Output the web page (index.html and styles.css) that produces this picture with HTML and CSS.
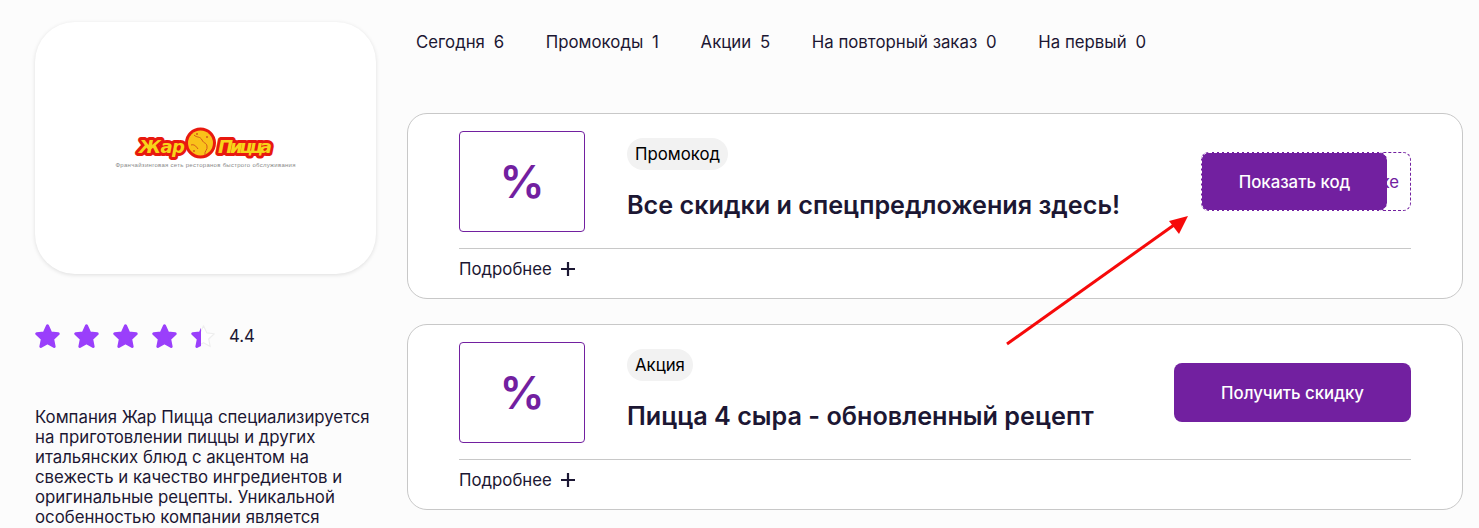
FILE: index.html
```html
<!DOCTYPE html>
<html lang="ru">
<head>
    <meta charset="UTF-8">
    <title>Жар Пицца — промокоды и акции</title>
    <link rel="stylesheet" href="styles.css">
</head>
<body>
    <div class="page">
        <aside class="sidebar">
            <div class="logo-card">
                <svg class="logo" width="184" height="48" viewBox="0 0 184 48">
                    <text class="logo-word logo-outline" x="25" y="29" textLength="46">Жар</text>
                    <text class="logo-word" x="25" y="29" textLength="46">Жар</text>
                    <circle cx="86.500" cy="19" r="15.500" fill="#e8190f"/>
                    <circle cx="86.500" cy="19" r="12.500" fill="#f9c21a"/>
                    <path d="M80 11c3 3 6 1 8 5s4 2 5 6-3 5-2 9M77 21c3-1 5 1 7 4" fill="none" stroke="#d4591a" stroke-width="1"/>
                    <circle cx="83" cy="10" r="1" fill="#d4591a"/>
                    <circle cx="93" cy="13" r="1" fill="#d4591a"/>
                    <circle cx="80" cy="27" r="1" fill="#d4591a"/>
                    <text class="logo-word logo-outline" x="104" y="29" textLength="54">Пицца</text>
                    <text class="logo-word" x="104" y="29" textLength="54">Пицца</text>
                    <text class="logo-tag" x="1.500" y="43" textLength="180">Франчайзинговая сеть ресторанов быстрого обслуживания</text>
                </svg>
            </div>

            <div class="rating">
                <div class="stars">
                    <svg class="star" viewBox="1 1 22 22"><path d="M12 2.500l2.900 6.300 6.600.8-4.900 4.600 1.300 6.700-5.900-3.300-5.900 3.300 1.300-6.700-4.900-4.600 6.600-.8z"/></svg>
                    <svg class="star" viewBox="1 1 22 22"><path d="M12 2.500l2.900 6.300 6.600.8-4.900 4.600 1.300 6.700-5.900-3.300-5.900 3.300 1.300-6.700-4.900-4.600 6.600-.8z"/></svg>
                    <svg class="star" viewBox="1 1 22 22"><path d="M12 2.500l2.900 6.300 6.600.8-4.900 4.600 1.300 6.700-5.900-3.300-5.900 3.300 1.300-6.700-4.900-4.600 6.600-.8z"/></svg>
                    <svg class="star" viewBox="1 1 22 22"><path d="M12 2.500l2.900 6.300 6.600.8-4.900 4.600 1.300 6.700-5.900-3.300-5.900 3.300 1.300-6.700-4.900-4.600 6.600-.8z"/></svg>
                    <svg class="star" viewBox="1 1 22 22">
                        <clipPath id="star-part"><rect x="0" y="0" width="9.800" height="24"/></clipPath>
                        <path class="star-empty" d="M12 2.500l2.900 6.300 6.600.8-4.900 4.600 1.300 6.700-5.900-3.300-5.900 3.300 1.300-6.700-4.900-4.600 6.600-.8z"/>
                        <path clip-path="url(#star-part)" d="M12 2.500l2.900 6.300 6.600.8-4.900 4.600 1.300 6.700-5.900-3.300-5.900 3.300 1.300-6.700-4.900-4.600 6.600-.8z"/>
                    </svg>
                </div>
                <span class="rating-value">4.4</span>
            </div>

            <p class="about">Компания Жар Пицца специализируется на приготовлении пиццы и других итальянских блюд с акцентом на свежесть и качество ингредиентов и оригинальные рецепты. Уникальной особенностью компании является</p>
        </aside>

        <main class="content">
            <nav class="tabs">
                <a class="tab">Сегодня<span>6</span></a>
                <a class="tab">Промокоды<span>1</span></a>
                <a class="tab">Акции<span>5</span></a>
                <a class="tab">На повторный заказ<span>0</span></a>
                <a class="tab">На первый<span>0</span></a>
            </nav>

            <section class="offer">
                <div class="offer-main">
                    <div class="percent-box">%</div>
                    <div class="offer-text">
                        <span class="pill">Промокод</span>
                        <h2>Все скидки и спецпредложения здесь!</h2>
                    </div>
                    <div class="code-wrap">
                        <span class="code-hidden">ке</span>
                        <button class="btn btn-code">Показать код</button>
                    </div>
                </div>
                <div class="offer-more">Подробнее
                    <svg class="plus" viewBox="0 0 16 16"><path d="M8 1v14M1 8h14"/></svg>
                </div>
            </section>

            <section class="offer">
                <div class="offer-main">
                    <div class="percent-box">%</div>
                    <div class="offer-text">
                        <span class="pill">Акция</span>
                        <h2>Пицца 4 сыра - обновленный рецепт</h2>
                    </div>
                    <button class="btn btn-discount">Получить скидку</button>
                </div>
                <div class="offer-more">Подробнее
                    <svg class="plus" viewBox="0 0 16 16"><path d="M8 1v14M1 8h14"/></svg>
                </div>
            </section>
        </main>
    </div>

    <!-- стрелка поверх страницы -->
    <svg class="arrow" width="190" height="140" viewBox="0 0 190 140">
        <path d="M3 131L170 12" stroke="#f60a0a" stroke-width="3" fill="none"/>
        <path d="M184 3L165 8L175 21z" fill="#f60a0a"/>
    </svg>
</body>
</html>
```

FILE: styles.css
```css
html, body {
    height: 100%;
    overflow: hidden;
}
body {
    margin: 0;
    background: #fcfcfc;
    color: #1c1733;
    font-family: Inter, "Liberation Sans", sans-serif;
    font-size: 16.8px;
}
.page {
    display: flex;
    gap: 31px;
    padding: 22px 16px 0 35px;
}
.sidebar {
    flex: 0 0 341px;
}
.logo-card {
    display: flex;
    align-items: center;
    justify-content: center;
    height: 252px;
    background: #fff;
    border-radius: 40px;
    box-shadow: 0 1px 4px rgba(0, 0, 0, .12);
}
.logo-word {
    font-family: "DejaVu Sans", sans-serif;
    font-size: 18px;
    font-weight: 700;
    font-style: italic;
    fill: #f7d41a;
}
.logo-outline {
    fill: #e8190f;
    stroke: #e8190f;
    stroke-width: 6px;
    stroke-linejoin: round;
}
.logo-tag {
    font-family: "Liberation Sans", sans-serif;
    font-size: 6px;
    fill: #8a8a8a;
}
.rating {
    display: flex;
    align-items: center;
    gap: 13px;
    margin-top: 50px;
}
.stars {
    display: flex;
    gap: 14px;
}
.star {
    display: block;
    width: 25px;
    height: 25px;
    fill: #9a3ffb;
    stroke: #9a3ffb;
    stroke-width: 2.500;
    stroke-linejoin: round;
}
.star .star-empty {
    fill: #fff;
    stroke: #eee;
    stroke-width: 1;
}
.rating-value {
    margin-top: -1px;
}
.about {
    margin: 58px 0 0;
    line-height: 20px;
}
.content {
    flex: 1;
}
.tabs {
    display: flex;
    gap: 41.700px;
    padding: 10px 0 0 9px;
    height: 81px;
    box-sizing: border-box;
}
.tab {
    line-height: 20px;
    color: #1c1733;
}
.tab span {
    margin-left: 8.800px;
}
.offer {
    box-sizing: border-box;
    height: 186px;
    margin-top: 10px;
    margin-bottom: 25px;
    padding: 17px 51px 0;
    background: #fff;
    border: 1px solid #c8c8c8;
    border-radius: 20px;
}
.offer-main {
    display: flex;
    align-items: center;
    height: 118px;
    border-bottom: 1px solid #c8c8c8;
    padding-bottom: 16px;
    box-sizing: border-box;
}
.percent-box {
    flex: 0 0 126px;
    height: 101px;
    box-sizing: border-box;
    display: flex;
    align-items: center;
    justify-content: center;
    border: 1px solid #7220a0;
    border-radius: 4px;
    color: #7220a0;
    font-size: 45px;
    font-weight: 600;
}
.offer-text {
    flex: 1;
    margin: 0 0 5px 42px;
}
.pill {
    display: inline-block;
    padding: 0 8px 0 8px;
    min-width: 0;
    line-height: 32px;
    background: #f2f2f2;
    border-radius: 16px;
    color: #000;
}
.offer-text h2 {
    margin: 19px 0 0;
    font-size: 25.200px;
    line-height: 32px;
    font-weight: 600;
}
.btn {
    height: 59px;
    border: none;
    border-radius: 8px;
    background: #7220a0;
    color: #fff;
    font-family: inherit;
    font-size: 16.8px;
    font-weight: 500;
    cursor: pointer;
}
.btn-discount {
    flex: 0 0 237px;
}
.code-wrap {
    position: relative;
    flex: 0 0 210px;
    height: 59px;
    box-sizing: border-box;
    display: flex;
    align-items: center;
    justify-content: flex-end;
    padding-right: 11px;
    border: 1px dashed #7220a0;
    border-radius: 8px;
    color: #7220a0;
}
.btn-code {
    position: absolute;
    left: -1px;
    top: -1px;
    width: 186px;
    border: 1px dashed #fff;
    border-right: none;
}
.offer-more {
    display: flex;
    align-items: center;
    gap: 8px;
    height: 40px;
}
.plus {
    width: 16px;
    height: 16px;
    fill: none;
    stroke: #1c1733;
    stroke-width: 2.200;
}
.arrow {
    position: absolute;
    left: 1004px;
    top: 213px;
}
```
